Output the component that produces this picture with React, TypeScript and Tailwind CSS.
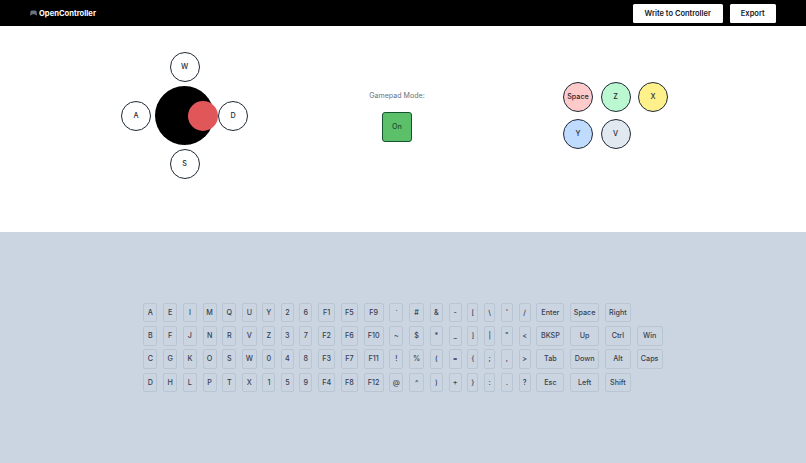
const font = { fontFamily: "Inter, 'Liberation Sans', sans-serif" };

const columns: [string, string[]][] = [
  ["w-[14px]", ["A", "B", "C", "D"]],
  ["w-[14px]", ["E", "F", "G", "H"]],
  ["w-[14px]", ["I", "J", "K", "L"]],
  ["w-[14px]", ["M", "N", "O", "P"]],
  ["w-[14px]", ["Q", "R", "S", "T"]],
  ["w-[14.5px]", ["U", "V", "W", "X"]],
  ["w-[13px]", ["Y", "Z", "0", "1"]],
  ["w-[12.5px]", ["2", "3", "4", "5"]],
  ["w-[13px]", ["6", "7", "8", "9"]],
  ["w-[17px]", ["F1", "F2", "F3", "F4"]],
  ["w-[17px]", ["F5", "F6", "F7", "F8"]],
  ["w-[20px]", ["F9", "F10", "F11", "F12"]],
  ["w-[14px]", ["`", "~", "!", "@"]],
  ["w-[15px]", ["#", "$", "%", "^"]],
  ["w-[13px]", ["&", "*", "(", ")"]],
  ["w-[13px]", ["-", "_", "=", "+"]],
  ["w-[11px]", ["[", "]", "{", "}"]],
  ["w-[11px]", ["\\", "|", ";", ":"]],
  ["w-[12px]", ["'", '"', ",", "."]],
  ["w-[12px]", ["/", "<", ">", "?"]],
  ["w-[28px]", ["Enter", "BKSP", "Tab", "Esc"]],
  ["w-[29px]", ["Space", "Up", "Down", "Left"]],
  ["w-[26px]", ["Right", "Ctrl", "Alt", "Shift"]],
  ["w-[26px]", ["Win", "Caps"]],
];

function Round({ label, color = "bg-white" }: { label: string; color?: string }) {
  return (
    <div className={`flex h-[30px] w-[30px] items-center justify-center rounded-full border border-[#1f2937] pt-[1px] text-[7.200px] font-medium text-[#1f2937] ${color}`}>
      {label}
    </div>
  );
}

export default function App() {
  return (
    <div style={font} className="flex h-[463px] w-[806px] flex-col overflow-hidden bg-white">
      <header className="flex h-[26px] shrink-0 items-center justify-between bg-black pl-[30px] pr-[30px]">
        <div className="flex items-center gap-[2px] pt-[1px] text-[7.600px] font-bold text-white">
          <svg width="7" height="6" viewBox="0 0 16 14" fill="#6b7280">
            <path d="M4 1h8c1.600 0 2.600 1 3 2.600l1 7c.2 1.600-1.200 2.600-2.400 1.600L11 10H5l-2.600 2.200C1.200 13.200-.2 12.200 0 10.600l1-7C1.400 2 2.400 1 4 1z" />
          </svg>
          <span>OpenController</span>
        </div>
        <div className="flex items-center gap-[7px]">
          <button className="h-[19px] w-[89.500px] rounded-[1.500px] bg-white pt-[1px] text-[7.500px] font-semibold text-[#111827]">Write to Controller</button>
          <button className="h-[19px] w-[46.500px] rounded-[1.500px] bg-white pt-[1px] text-[7.500px] font-semibold text-[#111827]">Export</button>
        </div>
      </header>

      <section className="flex h-[206px] shrink-0 items-center pb-[27px] pl-[121px]">
        <div className="grid grid-cols-[30px_59px_30px] grid-rows-[30px_59px_30px] gap-[4px]">
          <div className="col-start-2 flex justify-center"><Round label="W" /></div>
          <div className="col-start-1 row-start-2 self-center"><Round label="A" /></div>
          <div className="relative col-start-2 row-start-2 h-[59px] w-[59px] rounded-full bg-black">
            <div className="absolute left-[33px] top-[15px] h-[30px] w-[30px] rounded-full bg-[#e15759]" />
          </div>
          <div className="col-start-3 row-start-2 self-center"><Round label="D" /></div>
          <div className="col-start-2 row-start-3 flex justify-center"><Round label="S" /></div>
        </div>

        <div className="ml-[121px] flex w-[56px] flex-col items-center gap-[10px] pt-[2px]">
          <span className="whitespace-nowrap text-[7.100px] text-[#6b7280]">Gamepad Mode:</span>
          <button className="flex h-[30px] w-[30px] items-center justify-center rounded-[3px] border border-[#14532d] bg-[#5cbf6a] pt-[1px] text-[7.200px] font-medium text-[#14532d]">On</button>
        </div>

        <div className="ml-[138px] grid grid-cols-[30px_30px_30px] gap-[7.500px]">
          <Round label="Space" color="bg-[#fecaca]" />
          <Round label="Z" color="bg-[#bbf7d0]" />
          <Round label="X" color="bg-[#fef08a]" />
          <Round label="Y" color="bg-[#bfdbfe]" />
          <Round label="V" color="bg-[#e2e8f0]" />
        </div>
      </section>

      <section className="flex flex-1 items-center justify-center bg-[#cbd5e1]">
        <div className="flex gap-[5.760px]">
          {columns.map(([width, keys]) => (
            <div key={keys[0]} className={`flex flex-col justify-center gap-[3.900px] ${width}`}>
              {keys.map((k) => (
                <div key={k} className="flex h-[19.400px] items-center justify-center rounded-[2px] border border-[#bac5d3] pt-[1px] text-[7.200px] font-medium text-[#374151]">
                  {k}
                </div>
              ))}
            </div>
          ))}
        </div>
      </section>
    </div>
  );
}
